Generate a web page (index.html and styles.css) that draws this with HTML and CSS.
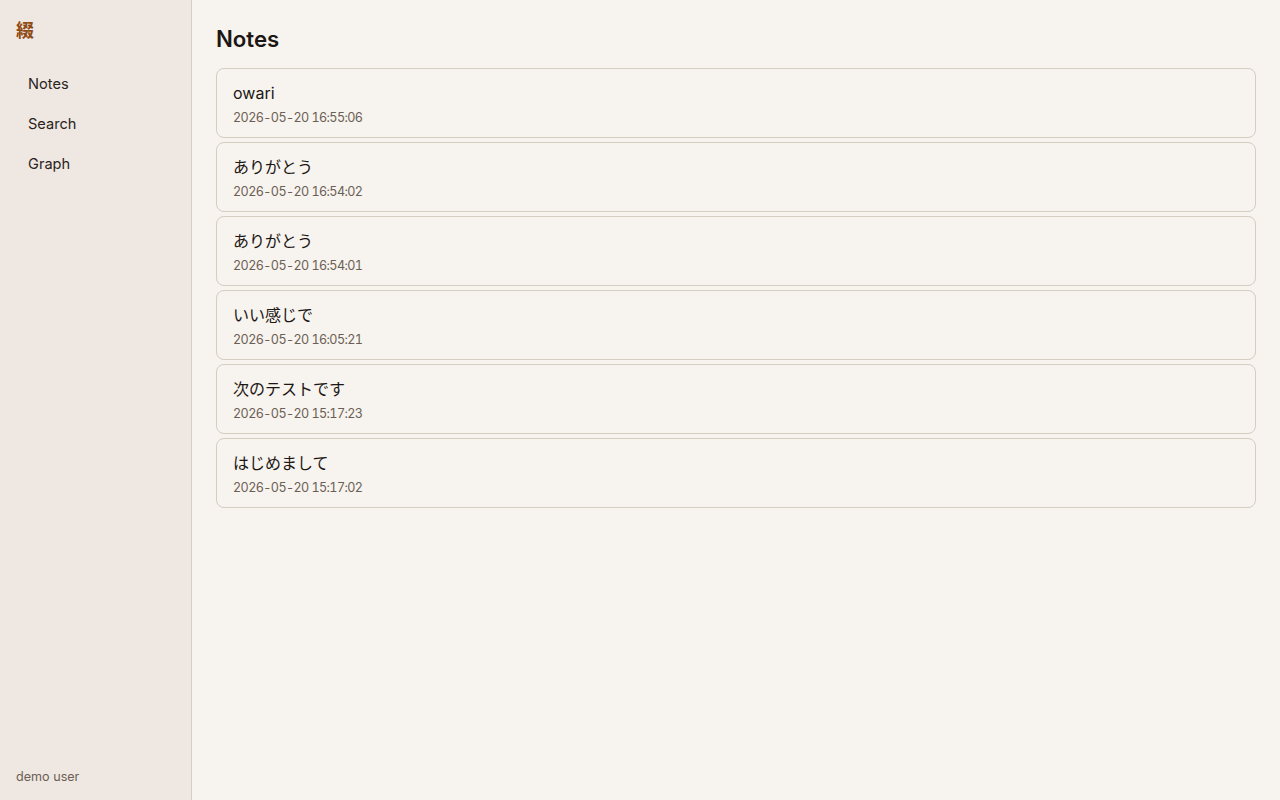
FILE: index.html
```html
<!DOCTYPE html>
<html lang="ja">
<head>
    <meta charset="UTF-8">
    <meta name="viewport" content="width=device-width, initial-scale=1.0">
    <title>Notes</title>
    <link rel="stylesheet" href="styles.css">
</head>
<body>

    <aside class="sidebar">
        <div class="logo">綴</div>
        <nav class="nav">
            <a class="nav-link" href="#">Notes</a>
            <a class="nav-link" href="#">Search</a>
            <a class="nav-link" href="#">Graph</a>
        </nav>
        <div class="user">demo user</div>
    </aside>

    <main class="main">
        <h1 class="page-title">Notes</h1>
        <div class="note-list">
            <a class="note" href="#">
                <div class="note-title">owari</div>
                <div class="note-date">2026-05-20 16:55:06</div>
            </a>
            <a class="note" href="#">
                <div class="note-title">ありがとう</div>
                <div class="note-date">2026-05-20 16:54:02</div>
            </a>
            <a class="note" href="#">
                <div class="note-title">ありがとう</div>
                <div class="note-date">2026-05-20 16:54:01</div>
            </a>
            <a class="note" href="#">
                <div class="note-title">いい感じで</div>
                <div class="note-date">2026-05-20 16:05:21</div>
            </a>
            <a class="note" href="#">
                <div class="note-title">次のテストです</div>
                <div class="note-date">2026-05-20 15:17:23</div>
            </a>
            <a class="note" href="#">
                <div class="note-title">はじめまして</div>
                <div class="note-date">2026-05-20 15:17:02</div>
            </a>
        </div>
    </main>

</body>
</html>
```

FILE: styles.css
```css
* {
    box-sizing: border-box;
}
body {
    font-family: Inter, "Noto Sans CJK JP", sans-serif;
    background-color: #f7f3ee;
    color: #1c1714;
    margin: 0;
    height: 800px;
    display: flex;
    overflow: hidden;
}
.sidebar {
    width: 192px;
    height: 100%;
    background-color: #efe8e2;
    border-right: 1px solid #d5cdbf;
    padding: 16px;
    display: flex;
    flex-direction: column;
}
.logo {
    font-size: 18px;
    font-weight: 700;
    line-height: 28px;
    color: #8f4a14;
    padding-top: 1px;
    margin-bottom: 19px;
}
.nav {
    display: flex;
    flex-direction: column;
    flex: 1;
}
.nav-link {
    display: block;
    height: 40px;
    line-height: 40px;
    padding: 0 12px;
    font-size: 14.6px;
    color: #2b2320;
    text-decoration: none;
}
.user {
    font-size: 12.6px;
    line-height: 16px;
    padding-top: 1px;
    margin-bottom: -1px;
    color: #6b5f55;
}
.main {
    flex: 1;
    padding: 24px;
}
.page-title {
    font-size: 22.2px;
    font-weight: 600;
    line-height: 30px;
    margin: 0 0 14px;
}
.note-list {
    display: flex;
    flex-direction: column;
    gap: 4px;
}
.note {
    display: block;
    height: 70px;
    padding: 13px 16px;
    border: 1px solid #d5cdbf;
    border-radius: 8px;
    color: inherit;
    text-decoration: none;
}
.note-title {
    font-size: 16px;
    line-height: 22px;
    margin-bottom: 6px;
}
.note-date {
    font-size: 12.6px;
    line-height: 16px;
    font-variant-numeric: tabular-nums;
    letter-spacing: -0.6px;
    color: #6b5f55;
}
```
